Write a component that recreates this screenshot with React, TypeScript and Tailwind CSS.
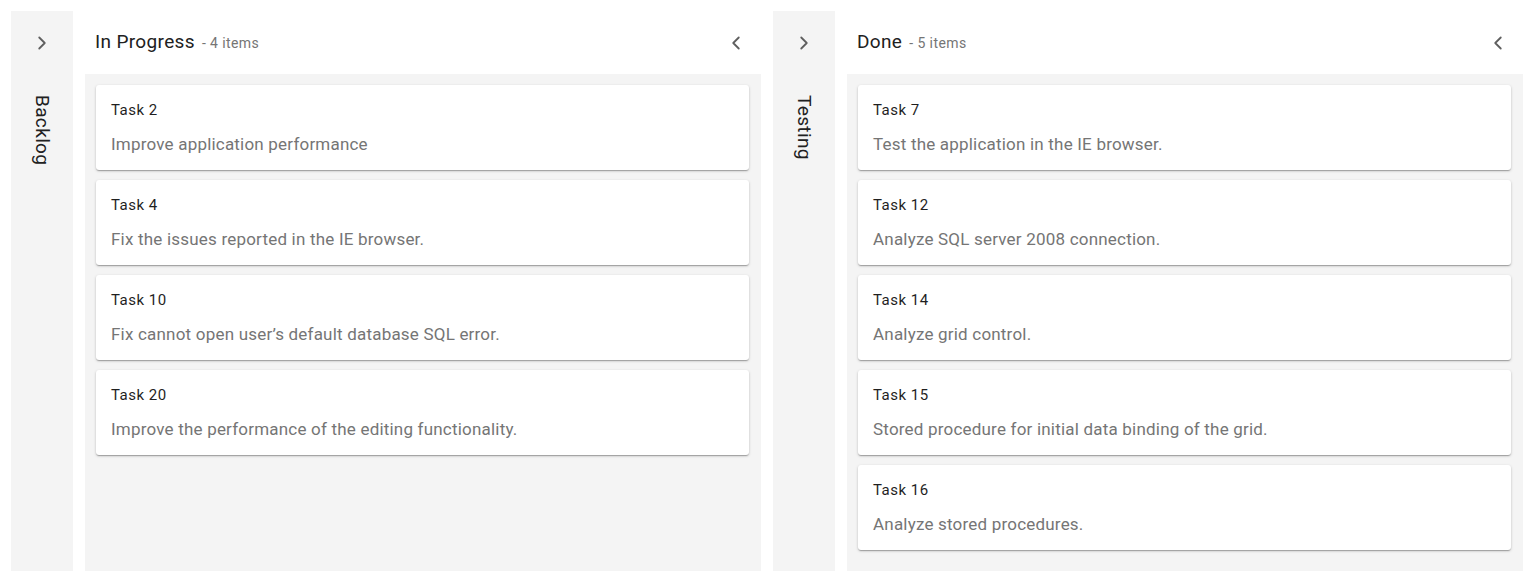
import { ChevronLeft, ChevronRight } from "lucide-react"

type Card = { id: string; text: string }

const inProgress: Card[] = [
  { id: "Task 2", text: "Improve application performance" },
  { id: "Task 4", text: "Fix the issues reported in the IE browser." },
  { id: "Task 10", text: "Fix cannot open user’s default database SQL error." },
  { id: "Task 20", text: "Improve the performance of the editing functionality." },
]

const done: Card[] = [
  { id: "Task 7", text: "Test the application in the IE browser." },
  { id: "Task 12", text: "Analyze SQL server 2008 connection." },
  { id: "Task 14", text: "Analyze grid control." },
  { id: "Task 15", text: "Stored procedure for initial data binding of the grid." },
  { id: "Task 16", text: "Analyze stored procedures." },
]

const Collapsed = ({ title }: { title: string }) => {
  return (
    <div className="w-[62px] shrink-0 bg-[#f4f4f4] flex flex-col items-center">
      <div className="h-[63px] flex items-center justify-center">
        <ChevronRight size={22} strokeWidth={2} className="text-[#5f5f5f]" />
      </div>
      <div className="[writing-mode:vertical-rl] text-[19px] leading-[22px] tracking-[0.35px] text-[#212121] pt-[21px]">
        {title}
      </div>
    </div>
  )
}

const Column = ({ title, cards }: { title: string; cards: Card[] }) => {
  return (
    <div className="w-[676px] shrink-0 flex flex-col">
      <div className="h-[63px] flex items-center justify-between pl-[10px] pr-[10px] bg-white">
        <div className="flex items-baseline">
          <span className="text-[19px] tracking-[0.35px] text-[#212121]">{title}</span>
          <span className="text-[14px] tracking-[0.4px] text-[#757575] ml-[7px]">- {cards.length} items</span>
        </div>
        <div className="w-[30px] h-[30px] flex items-center justify-center">
          <ChevronLeft size={22} strokeWidth={2} className="text-[#5f5f5f]" />
        </div>
      </div>
      <div className="flex-1 bg-[#f4f4f4] pt-[11px] pl-[11px] pr-[12px] flex flex-col gap-[10px]">
        {cards.map((c) => (
          <div
            key={c.id}
            className="bg-white rounded-[3px] h-[85px] px-[15px] pt-[15px] shadow-[0_1px_3px_0_rgba(0,0,0,0.2),0_1px_1px_0_rgba(0,0,0,0.14),0_2px_1px_-1px_rgba(0,0,0,0.12)]"
          >
            <div className="text-[15px] leading-[20px] tracking-[0.5px] text-[#1f1f1f]">{c.id}</div>
            <div className="text-[17px] leading-[24px] tracking-[0.2px] text-[#757575] mt-[12px]">{c.text}</div>
          </div>
        ))}
      </div>
    </div>
  )
}

export default function App() {
  return (
    <div className="h-[581px] w-full bg-white pt-[11px] pb-[10px] px-[11px] flex gap-[12px] font-['Roboto',sans-serif]">
      <Collapsed title="Backlog" />
      <Column title="In Progress" cards={inProgress} />
      <Collapsed title="Testing" />
      <Column title="Done" cards={done} />
    </div>
  )
}
